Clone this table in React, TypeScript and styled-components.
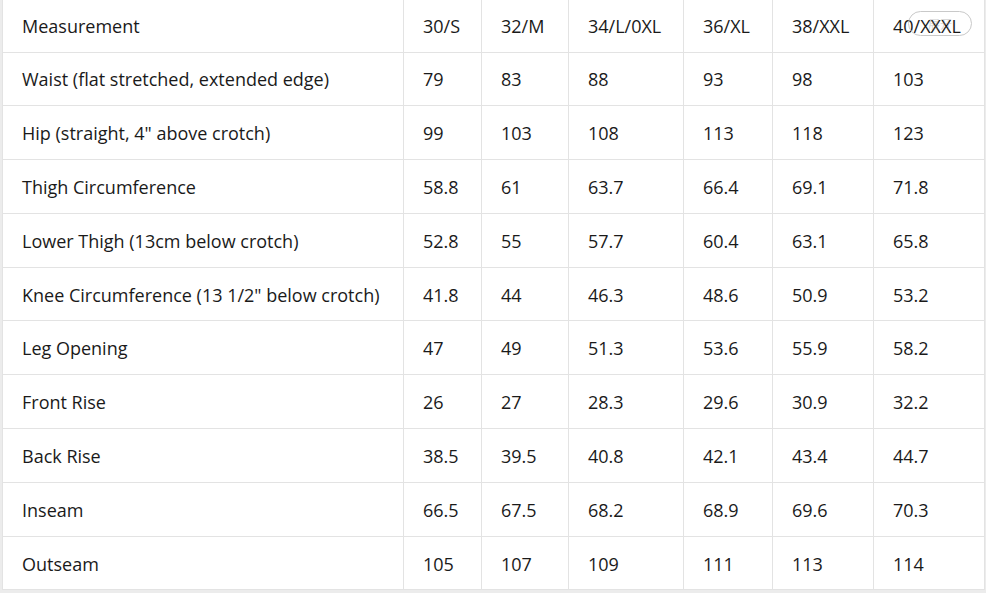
import React from "react";
import styled, { createGlobalStyle } from "styled-components";

const GlobalStyle = createGlobalStyle`
  html, body {
    margin: 0;
    padding: 0;
    background: #ffffff;
  }
  body {
    font-family: "Open Sans", "Noto Sans", "Noto Sans CJK SC", sans-serif;
    color: #1a1a1a;
  }
`;

const columns = [401, 78, 87, 115, 89, 101, 111];

const sizes = ["30/S", "32/M", "34/L/0XL", "36/XL", "38/XXL", "40/XXXL"];

const rows: [string, string[]][] = [
  ["Waist (flat stretched, extended edge)", ["79", "83", "88", "93", "98", "103"]],
  ["Hip (straight, 4\" above crotch)", ["99", "103", "108", "113", "118", "123"]],
  ["Thigh Circumference", ["58.8", "61", "63.7", "66.4", "69.1", "71.8"]],
  ["Lower Thigh (13cm below crotch)", ["52.8", "55", "57.7", "60.4", "63.1", "65.8"]],
  ["Knee Circumference (13 1/2\" below crotch)", ["41.8", "44", "46.3", "48.6", "50.9", "53.2"]],
  ["Leg Opening", ["47", "49", "51.3", "53.6", "55.9", "58.2"]],
  ["Front Rise", ["26", "27", "28.3", "29.6", "30.9", "32.2"]],
  ["Back Rise", ["38.5", "39.5", "40.8", "42.1", "43.4", "44.7"]],
  ["Inseam", ["66.5", "67.5", "68.2", "68.9", "69.6", "70.3"]],
  ["Outseam", ["105", "107", "109", "111", "113", "114"]],
];

const Page = styled.div`
  width: 986px;
  height: 593px;
  overflow: hidden;
  background: #ececec;
  position: relative;
`;

const Sheet = styled.div`
  margin-left: 2px;
  width: 983px;
  background: #ffffff;
`;

const Table = styled.table`
  border-collapse: collapse;
  table-layout: fixed;
  width: 983px;
  font-size: 18px;
`;

const Row = styled.tr<{ $head?: boolean }>`
  height: ${(p) => (p.$head ? "52px" : "53.8px")};
`;

const Cell = styled.td`
  padding: 1px 0 0 19px;
  border-left: 1px solid #e3e3e3;
  border-right: 1px solid #e3e3e3;
  border-bottom: 1px solid #e3e3e3;
  white-space: nowrap;
  vertical-align: middle;
  line-height: 1;
  font-weight: 400;
`;

const Pill = styled.div`
  position: absolute;
  left: 908px;
  top: 11px;
  width: 64px;
  height: 25px;
  border: 1px solid #c9c9c9;
  border-radius: 13px;
  box-sizing: border-box;
  display: flex;
  align-items: center;
  justify-content: center;
  font-size: 12px;
  color: rgba(120, 120, 120, 0.3);
  pointer-events: none;
`;

export default function App() {
  return (
    <Page>
      <GlobalStyle />
      <Sheet>
        <Table>
          <colgroup>
            {columns.map((w, i) => (
              <col key={i} style={{ width: w }} />
            ))}
          </colgroup>
          <tbody>
            <Row $head>
              <Cell>Measurement</Cell>
              {sizes.map((s) => (
                <Cell key={s}>{s}</Cell>
              ))}
            </Row>
            {rows.map(([label, vals]) => (
              <Row key={label}>
                <Cell>{label}</Cell>
                {vals.map((v, i) => (
                  <Cell key={i}>{v}</Cell>
                ))}
              </Row>
            ))}
          </tbody>
        </Table>
      </Sheet>
      <Pill>展开</Pill>
    </Page>
  );
}
